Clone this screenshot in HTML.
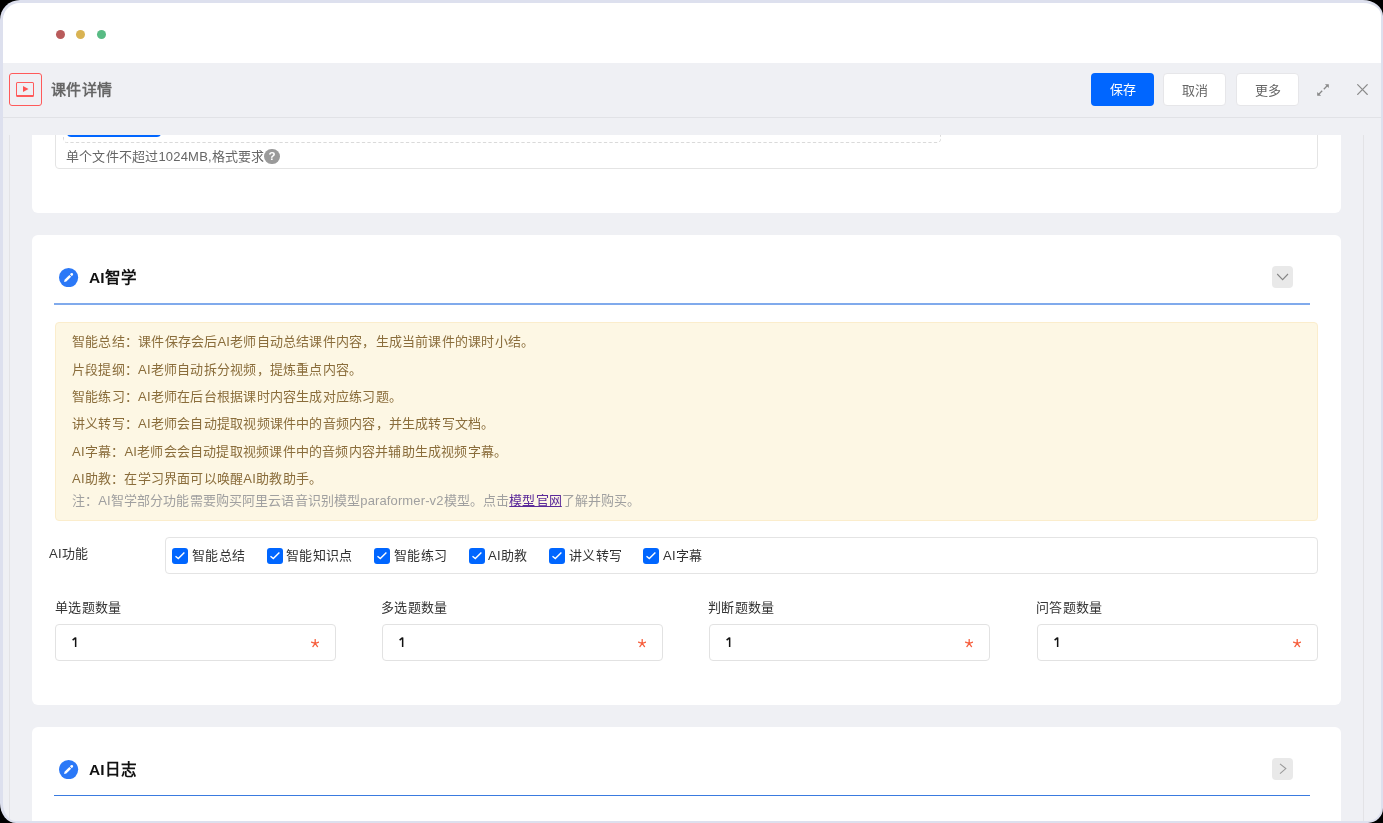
<!DOCTYPE html>
<html lang="zh-CN">
<head>
<meta charset="utf-8">
<style>
*{box-sizing:border-box;margin:0;padding:0}
html,body{width:1383px;height:823px;overflow:hidden;background:#000}
#win{will-change:transform}
body{font-family:"Liberation Sans",sans-serif;position:relative}
.abs{position:absolute}
#frame{position:absolute;left:0;top:0;width:1383px;height:823px;border-radius:20px 20px 15px 16px / 20px 16px 15px 20px;background:#dde0ee}
#win{position:absolute;left:3px;top:3px;width:1378px;height:818px;border-radius:17px 18px 13px 13px / 17px 13px 13px 18px;background:#eff0f4;overflow:hidden}
#titlebar{position:absolute;left:0;top:0;width:1378px;height:60px;background:#fff}
.dot{position:absolute;width:9px;height:9px;border-radius:50%;top:27.3px}
#hdr{position:absolute;left:0;top:60px;width:1378px;height:55px;border-bottom:1px solid #e1e2e6}
.btn{position:absolute;top:10px;height:33px;width:63px;border-radius:4px;font-size:13px;line-height:33px;text-align:center}
.t{position:absolute;white-space:nowrap}
#scroll{position:absolute;left:6px;top:132px;width:1355px;height:700px;border-left:1px solid #e3e3e6;border-right:1px solid #e3e3e6;overflow:hidden}
.card{position:absolute;left:22px;width:1309px;background:#fff;border-radius:6px}
.pen{position:absolute}
.h{position:absolute;font-size:15.5px;font-weight:bold;color:#111;line-height:16px;top:35px}
.chev{position:absolute;width:21px;height:22px;border-radius:4px;background:#e9e9e9}
.al{position:absolute;left:16px;font-size:13px;line-height:13px;color:#8a6d3b;white-space:nowrap;letter-spacing:0.22px}
.cb{position:absolute;top:10px;width:16px;height:16px;border-radius:3px;background:#0066ff}
.cbt{position:absolute;top:11px;font-size:13px;line-height:13px;color:#333;white-space:nowrap;letter-spacing:0.35px}
.lab{position:absolute;font-size:13px;line-height:13px;color:#333;white-space:nowrap;letter-spacing:0.3px}
.inp{position:absolute;width:281px;height:37px;border:1px solid #e2e2e2;border-radius:4px;background:#fff}
.inp .one{position:absolute;left:16px;top:12px}
.inp .ast{position:absolute;left:255px;top:14px}
</style>
</head>
<body>
<div id="frame"></div>
<div id="win">
  <div id="titlebar">
    <div class="dot" style="left:52.7px;background:#b95b5b"></div>
    <div class="dot" style="left:73.4px;background:#d9b352"></div>
    <div class="dot" style="left:94px;background:#58bb84"></div>
  </div>
  <div id="hdr">
    <div class="abs" style="left:6px;top:10px;width:33px;height:33px;border:1px solid #ff5a5a;border-radius:3px"></div>
    <div class="abs" style="left:13.3px;top:18.8px;width:17.5px;height:15px;border:1.6px solid #ff5a5a;border-bottom-width:2px;border-radius:1.5px"></div>
    <svg class="abs" style="left:20px;top:23px" width="6" height="6" viewBox="0 0 6 6"><path d="M0 0L5.5 3L0 6Z" fill="#ff5252"/></svg>
    <div class="t" style="left:48px;top:18.6px;font-size:15px;line-height:16px;font-weight:bold;color:#666;letter-spacing:0.45px">课件详情</div>
    <div class="btn" style="left:1088px;background:#0066ff;color:#fff">保存</div>
    <div class="btn" style="left:1160px;background:#fff;color:#666;border:1px solid #e6e6e9">取消</div>
    <div class="btn" style="left:1233px;background:#fff;color:#666;border:1px solid #e6e6e9">更多</div>
    <svg class="abs" style="left:1314px;top:21px" width="12" height="12" viewBox="0 0 12 12"><path d="M7.9 0.2H11.8V4.1Z" fill="#888"/><path d="M6.8 5.2L10.2 1.8M5.2 6.8L1.8 10.2" stroke="#888" stroke-width="1.3"/><path d="M0.2 7.9V11.8H4.1Z" fill="#888"/></svg>
    <svg class="abs" style="left:1354px;top:21px" width="11" height="11" viewBox="0 0 11 11"><path d="M0.3 0.3L10.6 10.8M10.6 0.3L0.3 10.8" stroke="#8c8c8c" stroke-width="1.2"/></svg>
  </div>

  <div id="scroll">
    <!-- card 1 (clipped) -->
    <div class="card" style="top:-60px;height:138px">
      <div class="abs" style="left:23px;top:0;width:1263px;height:94px;border:1px solid #e4e4e4;border-radius:4px">
        <svg class="abs" style="left:7px;top:0" width="878" height="67" viewBox="0 0 878 67"><rect x="0.5" y="0.5" width="877" height="66" rx="3" fill="none" stroke="#dadada" stroke-dasharray="3.3 2.2"/></svg>
        <div class="abs" style="left:11px;top:0;width:94px;height:61px;background:#0066ff;border-radius:4px"></div>
        <div class="t" style="left:10px;top:74px;font-size:13px;line-height:13px;color:#666;letter-spacing:0.2px">单个文件不超过1024MB,格式要求</div>
        <div class="abs" style="left:208.3px;top:72.7px;width:15.4px;height:15.4px;border-radius:50%;background:#9a9a9a;color:#fff;font-size:11.5px;line-height:15.4px;text-align:center;font-weight:bold;-webkit-text-stroke:0">?</div>
      </div>
    </div>

    <!-- card 2 -->
    <div class="card" style="top:100px;height:470px">
      <svg class="pen" style="left:27.4px;top:32.6px" width="19.2" height="19.2" viewBox="0 0 19.2 19.2"><circle cx="9.6" cy="9.6" r="9.6" fill="#2b78f7"/><g transform="translate(5.1,14.0) rotate(-45)" fill="#fff"><path d="M0 0 L1.9 -1.25 H8.7 V1.25 H1.9 Z"/><path d="M9.6 -1.3 H10.9 A1.3 1.3 0 0 1 10.9 1.3 H9.6 Z"/></g></svg>
      <div class="h" style="left:57px">AI智学</div>
      <div class="abs" style="left:22px;top:68px;width:1256px;height:2px;background:#80aaec"></div>
      <div class="chev" style="left:1240px;top:31px"><svg width="21" height="22" viewBox="0 0 21 22" style="position:absolute;left:0;top:0"><path d="M5.2 8L10.6 13.6L16 8" fill="none" stroke="#858585" stroke-width="1.1"/></svg></div>
      <div class="abs" style="left:23px;top:87px;width:1263px;height:199px;background:#fdf7e4;border:1px solid #fbedcc;border-radius:4px">
        <div class="al" style="top:12px">智能总结：课件保存会后AI老师自动总结课件内容，生成当前课件的课时小结。</div>
        <div class="al" style="top:40px">片段提纲：AI老师自动拆分视频，提炼重点内容。</div>
        <div class="al" style="top:67px">智能练习：AI老师在后台根据课时内容生成对应练习题。</div>
        <div class="al" style="top:94px">讲义转写：AI老师会自动提取视频课件中的音频内容，并生成转写文档。</div>
        <div class="al" style="top:122px">AI字幕：AI老师会会自动提取视频课件中的音频内容并辅助生成视频字幕。</div>
        <div class="al" style="top:149px">AI助教：在学习界面可以唤醒AI助教助手。</div>
        <div class="al" style="top:171px;color:#a0a0a0;letter-spacing:0.13px">注：AI智学部分功能需要购买阿里云语音识别模型paraformer-v2模型。点击<span style="color:#5b2a9a;text-decoration:underline">模型官网</span>了解并购买。</div>
      </div>
      <div class="lab" style="left:17px;top:312px">AI功能</div>
      <div class="abs" style="left:133px;top:302px;width:1153px;height:37px;border:1px solid #e4e4e4;border-radius:4px">
        <div class="cb" style="left:6px"><svg width="16" height="16" viewBox="0 0 16 16" style="position:absolute;left:0;top:0"><path d="M3.5 8.2L6.3 10.6L12.4 4.4" fill="none" stroke="#fff" stroke-width="1.4"/></svg></div><div class="cbt" style="left:26px">智能总结</div>
        <div class="cb" style="left:101px"><svg width="16" height="16" viewBox="0 0 16 16" style="position:absolute;left:0;top:0"><path d="M3.5 8.2L6.3 10.6L12.4 4.4" fill="none" stroke="#fff" stroke-width="1.4"/></svg></div><div class="cbt" style="left:120px">智能知识点</div>
        <div class="cb" style="left:208px"><svg width="16" height="16" viewBox="0 0 16 16" style="position:absolute;left:0;top:0"><path d="M3.5 8.2L6.3 10.6L12.4 4.4" fill="none" stroke="#fff" stroke-width="1.4"/></svg></div><div class="cbt" style="left:228px">智能练习</div>
        <div class="cb" style="left:303px"><svg width="16" height="16" viewBox="0 0 16 16" style="position:absolute;left:0;top:0"><path d="M3.5 8.2L6.3 10.6L12.4 4.4" fill="none" stroke="#fff" stroke-width="1.4"/></svg></div><div class="cbt" style="left:322px">AI助教</div>
        <div class="cb" style="left:383px"><svg width="16" height="16" viewBox="0 0 16 16" style="position:absolute;left:0;top:0"><path d="M3.5 8.2L6.3 10.6L12.4 4.4" fill="none" stroke="#fff" stroke-width="1.4"/></svg></div><div class="cbt" style="left:403px">讲义转写</div>
        <div class="cb" style="left:477px"><svg width="16" height="16" viewBox="0 0 16 16" style="position:absolute;left:0;top:0"><path d="M3.5 8.2L6.3 10.6L12.4 4.4" fill="none" stroke="#fff" stroke-width="1.4"/></svg></div><div class="cbt" style="left:497px">AI字幕</div>
      </div>
      <div class="lab" style="left:23px;top:366px">单选题数量</div>
      <div class="lab" style="left:349px;top:366px">多选题数量</div>
      <div class="lab" style="left:676px;top:366px">判断题数量</div>
      <div class="lab" style="left:1004px;top:366px">问答题数量</div>
      <div class="inp" style="left:23px;top:389px"><svg class="one" width="6" height="11" viewBox="0 0 6 11"><path d="M3.65 0.4V9.9M3.7 0.6L0.6 3.1" stroke="#111" stroke-width="1.5" fill="none"/></svg><svg class="ast" width="8.4" height="8.6" viewBox="0 0 8.4 8.6"><g stroke="#f6603f" stroke-width="1.3" stroke-linecap="round" fill="none" transform="translate(4.2,4.4)"><path d="M0 0V-3.9M0 0L3.75 -1.2M0 0L-3.75 -1.2M0 0L2.3 3.2M0 0L-2.3 3.2"/></g></svg></div>
      <div class="inp" style="left:350px;top:389px"><svg class="one" width="6" height="11" viewBox="0 0 6 11"><path d="M3.65 0.4V9.9M3.7 0.6L0.6 3.1" stroke="#111" stroke-width="1.5" fill="none"/></svg><svg class="ast" width="8.4" height="8.6" viewBox="0 0 8.4 8.6"><g stroke="#f6603f" stroke-width="1.3" stroke-linecap="round" fill="none" transform="translate(4.2,4.4)"><path d="M0 0V-3.9M0 0L3.75 -1.2M0 0L-3.75 -1.2M0 0L2.3 3.2M0 0L-2.3 3.2"/></g></svg></div>
      <div class="inp" style="left:677px;top:389px"><svg class="one" width="6" height="11" viewBox="0 0 6 11"><path d="M3.65 0.4V9.9M3.7 0.6L0.6 3.1" stroke="#111" stroke-width="1.5" fill="none"/></svg><svg class="ast" width="8.4" height="8.6" viewBox="0 0 8.4 8.6"><g stroke="#f6603f" stroke-width="1.3" stroke-linecap="round" fill="none" transform="translate(4.2,4.4)"><path d="M0 0V-3.9M0 0L3.75 -1.2M0 0L-3.75 -1.2M0 0L2.3 3.2M0 0L-2.3 3.2"/></g></svg></div>
      <div class="inp" style="left:1005px;top:389px"><svg class="one" width="6" height="11" viewBox="0 0 6 11"><path d="M3.65 0.4V9.9M3.7 0.6L0.6 3.1" stroke="#111" stroke-width="1.5" fill="none"/></svg><svg class="ast" width="8.4" height="8.6" viewBox="0 0 8.4 8.6"><g stroke="#f6603f" stroke-width="1.3" stroke-linecap="round" fill="none" transform="translate(4.2,4.4)"><path d="M0 0V-3.9M0 0L3.75 -1.2M0 0L-3.75 -1.2M0 0L2.3 3.2M0 0L-2.3 3.2"/></g></svg></div>
    </div>

    <!-- card 3 -->
    <div class="card" style="top:592px;height:200px">
      <svg class="pen" style="left:27.4px;top:32.6px" width="19.2" height="19.2" viewBox="0 0 19.2 19.2"><circle cx="9.6" cy="9.6" r="9.6" fill="#2b78f7"/><g transform="translate(5.1,14.0) rotate(-45)" fill="#fff"><path d="M0 0 L1.9 -1.25 H8.7 V1.25 H1.9 Z"/><path d="M9.6 -1.3 H10.9 A1.3 1.3 0 0 1 10.9 1.3 H9.6 Z"/></g></svg>
      <div class="h" style="left:57px">AI日志</div>
      <div class="abs" style="left:22px;top:68px;width:1256px;height:1px;background:#3a7be0"></div>
      <div class="chev" style="left:1240px;top:31px"><svg width="21" height="22" viewBox="0 0 21 22" style="position:absolute;left:0;top:0"><path d="M8 5.8L13.8 10.6L8 15.6" fill="none" stroke="#9a9a9a" stroke-width="1.1"/></svg></div>
    </div>
  </div>
</div>
</body>
</html>
